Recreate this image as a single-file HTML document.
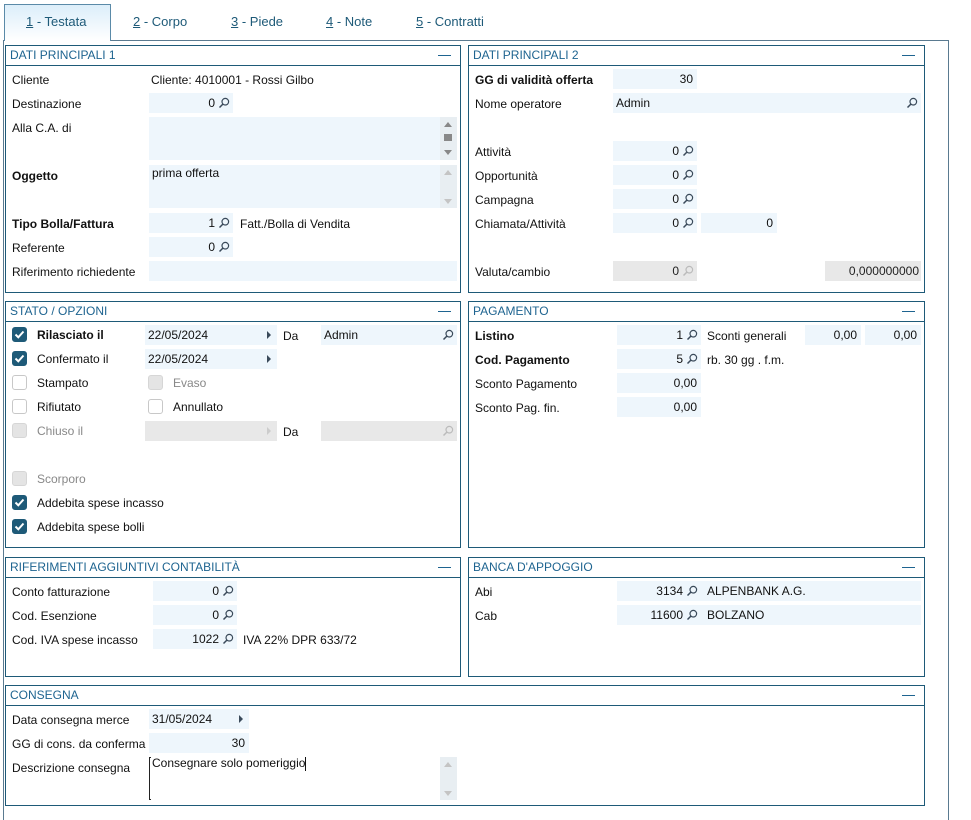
<!DOCTYPE html>
<html><head><meta charset="utf-8"><style>
*{box-sizing:border-box;margin:0;padding:0}
body{width:971px;height:810px;background:#fff;font-family:"Liberation Sans",sans-serif;font-size:12px;color:#111;position:relative;overflow:hidden}
div,span{position:absolute}
.p{border:1.5px solid #1e5a78;background:#fff}
.h{left:0;right:0;top:0;height:20px;border-bottom:1.5px solid #1e5a78;color:#1e6490;font-size:12px;line-height:19px;padding-left:4px}
.h:after{content:"";position:absolute;right:9px;top:9px;width:13px;height:1px;background:#1e6490}
.l{line-height:20px;white-space:nowrap}
.b{font-weight:bold}
.f{background:#eef6fc;height:20px;line-height:20px;white-space:nowrap}
.g{background:#e8e8e8;height:20px;line-height:20px;color:#222}
.r{text-align:right}
.s{position:absolute;right:3px;top:4px;width:12px;height:12px}
.cb{width:15px;height:15px;border-radius:3px;border:1px solid #c8c8c8;background:#fff}
.cb.on{background:#1e5a78;border-color:#1e5a78}
.cb.dis{background:#e4e4e4;border-color:#d6d6d6}
.arr{position:absolute;right:6px;top:6px;width:0;height:0;border-left:4px solid #3a4a5a;border-top:4px solid transparent;border-bottom:4px solid transparent}
</style></head><body>
<svg width="0" height="0" style="position:absolute"><defs><symbol id="q" viewBox="0 0 12 12"><circle cx="7.3" cy="4.7" r="3.3" fill="none" stroke="currentColor" stroke-width="1.2"/><path d="M5 7 L1.5 10.5" stroke="currentColor" stroke-width="1.5"/></symbol><symbol id="ck" viewBox="0 0 15 15"><path d="M3.5 7.5 L6.3 10.3 L11.5 4.5" fill="none" stroke="#fff" stroke-width="2"/></symbol></defs></svg>

<div style="left:3px;top:40px;width:946px;height:780px;border:1px solid #5a7a90;border-bottom:none"></div>
<div style="left:4px;top:4px;width:107px;height:37px;border:1px solid #5a8aa8;border-bottom:none;background:linear-gradient(#dceefa,#fff);"></div>
<span class="l" style="left:26px;top:12px;font-size:13px;color:#1e5a78"><u>1</u> - Testata</span>
<span class="l" style="left:133px;top:12px;font-size:13px;color:#1e5a78"><u>2</u> - Corpo</span>
<span class="l" style="left:231px;top:12px;font-size:13px;color:#1e5a78"><u>3</u> - Piede</span>
<span class="l" style="left:326px;top:12px;font-size:13px;color:#1e5a78"><u>4</u> - Note</span>
<span class="l" style="left:416px;top:12px;font-size:13px;color:#1e5a78"><u>5</u> - Contratti</span>

<div class="p" style="left:5px;top:45px;width:456px;height:248px"><div class="h">DATI PRINCIPALI 1</div></div>
<span class="l" style="left:12px;top:70px">Cliente</span><span class="l" style="left:151px;top:70px">Cliente: 4010001 - Rossi Gilbo</span>
<span class="l" style="left:12px;top:94px">Destinazione</span>
<div class="f r" style="left:149px;top:93px;width:84px;padding-right:18px">0<svg class="s" style="color:#3a4a5a"><use href="#q"/></svg></div>
<span class="l" style="left:12px;top:118px">Alla C.A. di</span>
<div class="f" style="left:149px;top:117px;width:308px;height:43px"></div>
<div style="left:440px;top:117px;width:17px;height:43px;background:#e8eef2"></div>
<div style="left:444px;top:122px;border-left:4px solid transparent;border-right:4px solid transparent;border-bottom:5px solid #888"></div>
<div style="left:444px;top:134px;width:8px;height:7px;background:#888"></div>
<div style="left:444px;top:150px;border-left:4px solid transparent;border-right:4px solid transparent;border-top:5px solid #888"></div>
<span class="l b" style="left:12px;top:166px">Oggetto</span>
<div class="f" style="left:149px;top:165px;width:308px;height:43px;line-height:14px;padding:1px 3px">prima offerta</div>
<div style="left:440px;top:165px;width:17px;height:43px;background:#e8eef2"></div>
<div style="left:444px;top:170px;border-left:4px solid transparent;border-right:4px solid transparent;border-bottom:5px solid #c4c4c4"></div>
<div style="left:444px;top:199px;border-left:4px solid transparent;border-right:4px solid transparent;border-top:5px solid #c4c4c4"></div>
<span class="l b" style="left:12px;top:214px">Tipo Bolla/Fattura</span>
<div class="f r" style="left:149px;top:213px;width:84px;padding-right:18px">1<svg class="s" style="color:#3a4a5a"><use href="#q"/></svg></div>
<span class="l" style="left:240px;top:214px">Fatt./Bolla di Vendita</span>
<span class="l" style="left:12px;top:238px">Referente</span>
<div class="f r" style="left:149px;top:237px;width:84px;padding-right:18px">0<svg class="s" style="color:#3a4a5a"><use href="#q"/></svg></div>
<span class="l" style="left:12px;top:262px">Riferimento richiedente</span>
<div class="f" style="left:149px;top:261px;width:308px"></div>

<div class="p" style="left:468px;top:45px;width:457px;height:248px"><div class="h">DATI PRINCIPALI 2</div></div>
<span class="l b" style="left:475px;top:70px">GG di validità offerta</span>
<div class="f r" style="left:613px;top:69px;width:84px;padding-right:4px">30</div>
<span class="l" style="left:475px;top:94px">Nome operatore</span>
<div class="f" style="left:613px;top:93px;width:308px;padding-left:3px">Admin<svg class="s" style="color:#3a4a5a"><use href="#q"/></svg></div>
<span class="l" style="left:475px;top:142px">Attività</span>
<div class="f r" style="left:613px;top:141px;width:84px;padding-right:18px">0<svg class="s" style="color:#3a4a5a"><use href="#q"/></svg></div>
<span class="l" style="left:475px;top:166px">Opportunità</span>
<div class="f r" style="left:613px;top:165px;width:84px;padding-right:18px">0<svg class="s" style="color:#3a4a5a"><use href="#q"/></svg></div>
<span class="l" style="left:475px;top:190px">Campagna</span>
<div class="f r" style="left:613px;top:189px;width:84px;padding-right:18px">0<svg class="s" style="color:#3a4a5a"><use href="#q"/></svg></div>
<span class="l" style="left:475px;top:214px">Chiamata/Attività</span>
<div class="f r" style="left:613px;top:213px;width:84px;padding-right:18px">0<svg class="s" style="color:#3a4a5a"><use href="#q"/></svg></div>
<div class="f r" style="left:701px;top:213px;width:76px;padding-right:4px">0</div>
<span class="l" style="left:475px;top:262px">Valuta/cambio</span>
<div class="g r" style="left:613px;top:261px;width:84px;padding-right:18px">0<svg class="s" style="color:#bbb"><use href="#q"/></svg></div>
<div class="g r" style="left:825px;top:261px;width:96px;padding-right:2px">0,000000000</div>

<div class="p" style="left:5px;top:301px;width:456px;height:247px"><div class="h">STATO / OPZIONI</div></div>
<div class="cb on" style="left:12px;top:327px"><svg width="15" height="15" style="position:absolute;left:-1px;top:-1px"><use href="#ck"/></svg></div>
<span class="l b" style="left:37px;top:325px">Rilasciato il</span>
<div class="f" style="left:145px;top:325px;width:132px;padding-left:3px">22/05/2024<i class="arr"></i></div>
<span class="l" style="left:283px;top:326px">Da</span>
<div class="f" style="left:321px;top:325px;width:136px;padding-left:3px">Admin<svg class="s" style="color:#3a4a5a"><use href="#q"/></svg></div>
<div class="cb on" style="left:12px;top:351px"><svg width="15" height="15" style="position:absolute;left:-1px;top:-1px"><use href="#ck"/></svg></div>
<span class="l" style="left:37px;top:349px">Confermato il</span>
<div class="f" style="left:145px;top:349px;width:132px;padding-left:3px">22/05/2024<i class="arr"></i></div>
<div class="cb" style="left:12px;top:375px"></div><span class="l" style="left:37px;top:373px">Stampato</span>
<div class="cb dis" style="left:148px;top:375px"></div><span class="l" style="left:173px;top:373px;color:#888">Evaso</span>
<div class="cb" style="left:12px;top:399px"></div><span class="l" style="left:37px;top:397px">Rifiutato</span>
<div class="cb" style="left:148px;top:399px"></div><span class="l" style="left:173px;top:397px">Annullato</span>
<div class="cb dis" style="left:12px;top:423px"></div><span class="l" style="left:37px;top:421px;color:#888">Chiuso il</span>
<div class="g" style="left:145px;top:421px;width:132px"><i class="arr" style="border-left-color:#ccc"></i></div>
<span class="l" style="left:283px;top:422px">Da</span>
<div class="g" style="left:321px;top:421px;width:136px"><svg class="s" style="color:#bbb"><use href="#q"/></svg></div>
<div class="cb dis" style="left:12px;top:471px"></div><span class="l" style="left:37px;top:469px;color:#888">Scorporo</span>
<div class="cb on" style="left:12px;top:495px"><svg width="15" height="15" style="position:absolute;left:-1px;top:-1px"><use href="#ck"/></svg></div><span class="l" style="left:37px;top:493px">Addebita spese incasso</span>
<div class="cb on" style="left:12px;top:519px"><svg width="15" height="15" style="position:absolute;left:-1px;top:-1px"><use href="#ck"/></svg></div><span class="l" style="left:37px;top:517px">Addebita spese bolli</span>

<div class="p" style="left:468px;top:301px;width:457px;height:247px"><div class="h">PAGAMENTO</div></div>
<span class="l b" style="left:475px;top:326px">Listino</span>
<div class="f r" style="left:617px;top:325px;width:84px;padding-right:18px">1<svg class="s" style="color:#3a4a5a"><use href="#q"/></svg></div>
<span class="l" style="left:707px;top:326px">Sconti generali</span>
<div class="f r" style="left:805px;top:325px;width:56px;padding-right:4px">0,00</div>
<div class="f r" style="left:865px;top:325px;width:56px;padding-right:4px">0,00</div>
<span class="l b" style="left:475px;top:350px">Cod. Pagamento</span>
<div class="f r" style="left:617px;top:349px;width:84px;padding-right:18px">5<svg class="s" style="color:#3a4a5a"><use href="#q"/></svg></div>
<span class="l" style="left:707px;top:350px">rb. 30 gg . f.m.</span>
<span class="l" style="left:475px;top:374px">Sconto Pagamento</span>
<div class="f r" style="left:617px;top:373px;width:84px;padding-right:4px">0,00</div>
<span class="l" style="left:475px;top:398px">Sconto Pag. fin.</span>
<div class="f r" style="left:617px;top:397px;width:84px;padding-right:4px">0,00</div>

<div class="p" style="left:5px;top:557px;width:456px;height:120px"><div class="h">RIFERIMENTI AGGIUNTIVI CONTABILITÀ</div></div>
<span class="l" style="left:12px;top:582px">Conto fatturazione</span>
<div class="f r" style="left:153px;top:581px;width:84px;padding-right:18px">0<svg class="s" style="color:#3a4a5a"><use href="#q"/></svg></div>
<span class="l" style="left:12px;top:606px">Cod. Esenzione</span>
<div class="f r" style="left:153px;top:605px;width:84px;padding-right:18px">0<svg class="s" style="color:#3a4a5a"><use href="#q"/></svg></div>
<span class="l" style="left:12px;top:630px">Cod. IVA spese incasso</span>
<div class="f r" style="left:153px;top:629px;width:84px;padding-right:18px">1022<svg class="s" style="color:#3a4a5a"><use href="#q"/></svg></div>
<span class="l" style="left:243px;top:630px">IVA 22% DPR 633/72</span>

<div class="p" style="left:468px;top:557px;width:457px;height:120px"><div class="h">BANCA D'APPOGGIO</div></div>
<span class="l" style="left:475px;top:582px">Abi</span>
<div class="f r" style="left:617px;top:581px;width:84px;padding-right:18px">3134<svg class="s" style="color:#3a4a5a"><use href="#q"/></svg></div>
<div class="f" style="left:701px;top:581px;width:220px;padding-left:6px">ALPENBANK A.G.</div>
<span class="l" style="left:475px;top:606px">Cab</span>
<div class="f r" style="left:617px;top:605px;width:84px;padding-right:18px">11600<svg class="s" style="color:#3a4a5a"><use href="#q"/></svg></div>
<div class="f" style="left:701px;top:605px;width:220px;padding-left:6px">BOLZANO</div>

<div class="p" style="left:5px;top:685px;width:920px;height:121px"><div class="h">CONSEGNA</div></div>
<span class="l" style="left:12px;top:710px">Data consegna merce</span>
<div class="f" style="left:149px;top:709px;width:100px;padding-left:3px">31/05/2024<i class="arr"></i></div>
<span class="l" style="left:12px;top:734px">GG di cons. da conferma</span>
<div class="f r" style="left:149px;top:733px;width:100px;padding-right:4px">30</div>
<span class="l" style="left:12px;top:758px">Descrizione consegna</span>
<div style="left:149px;top:757px;width:2px;height:43px;border:1px solid #222;border-right:none"></div>
<span class="l" style="left:152px;top:755px;line-height:16px">Consegnare solo pomeriggio<span style="position:relative;display:inline-block;width:1px;height:14px;background:#111;vertical-align:middle"></span></span>
<div style="left:440px;top:757px;width:17px;height:43px;background:#e8eef2"></div>
<div style="left:444px;top:762px;border-left:4px solid transparent;border-right:4px solid transparent;border-bottom:5px solid #c4c4c4"></div>
<div style="left:444px;top:791px;border-left:4px solid transparent;border-right:4px solid transparent;border-top:5px solid #c4c4c4"></div>
</body></html>
